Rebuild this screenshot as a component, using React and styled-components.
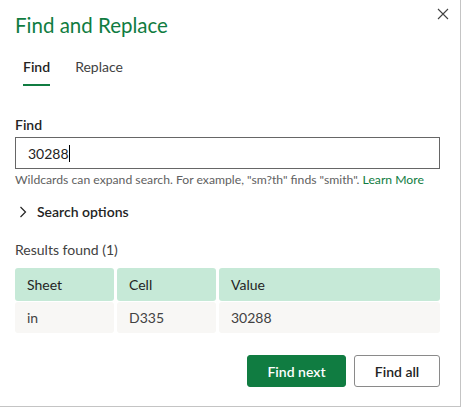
import React from "react";
import styled, { createGlobalStyle } from "styled-components";

const GlobalStyle = createGlobalStyle`
  html, body {
    margin: 0;
    padding: 0;
    background: #ffffff;
  }
  body {
    font-family: Lato, "Noto Sans", "Liberation Sans", sans-serif;
    color: #242424;
  }
`;

const Dialog = styled.div`
  position: relative;
  width: 461px;
  height: 407px;
  box-sizing: border-box;
  border-right: 1px solid #c4c4c4;
  border-bottom: 1px solid #c4c4c4;
  padding: 12px 20px 0 15px;
  display: flex;
  flex-direction: column;
`;

const Title = styled.h1`
  margin: 0;
  font-size: 20.5px;
  font-weight: 400;
  line-height: 26px;
  color: #107c41;
`;

const CloseButton = styled.button`
  position: absolute;
  top: 5px;
  right: 9px;
  width: 17px;
  height: 17px;
  padding: 0;
  border: none;
  background: none;
  display: flex;
  align-items: center;
  justify-content: center;
`;

const Tabs = styled.div`
  display: flex;
  gap: 25px;
  margin-top: 20px;
  padding-left: 8px;
`;

const Tab = styled.div`
  font-size: 14px;
  line-height: 18px;
  padding-bottom: 8px;
  color: ${(p) => (p.$active ? "#242424" : "#424242")};
  font-weight: ${(p) => (p.$active ? 600 : 400)};
  border-bottom: 2px solid ${(p) => (p.$active ? "#107c41" : "transparent")};
`;

const Label = styled.div`
  margin-top: 30px;
  font-size: 14px;
  font-weight: 600;
  line-height: 18px;
  color: #242424;
`;

const Input = styled.div`
  margin-top: 3px;
  height: 32px;
  box-sizing: border-box;
  border: 1px solid #666666;
  padding-left: 12px;
  display: flex;
  align-items: center;
  font-size: 14px;
  color: #242424;
`;

const Caret = styled.span`
  display: inline-block;
  width: 1px;
  height: 17px;
  background: #000;
`;

const Hint = styled.div`
  margin-top: 3px;
  font-size: 12.2px;
  line-height: 16px;
  color: #616161;
  white-space: nowrap;
`;

const HintLink = styled.span`
  color: #107c41;
`;

const Expander = styled.div`
  margin-top: 15px;
  display: flex;
  align-items: center;
  gap: 10px;
  padding-left: 4px;
  font-size: 14px;
  font-weight: 600;
  line-height: 18px;
  color: #242424;
`;

const Results = styled.div`
  margin-top: 20px;
  font-size: 14px;
  font-weight: 400;
  line-height: 18px;
  color: #424242;
`;

const Table = styled.div`
  margin-top: 9px;
  display: grid;
  grid-template-columns: 99px 99px 1fr;
  gap: 1px 3px;
`;

const Cell = styled.div`
  height: ${(p) => (p.$head ? "33px" : "31px")};
  box-sizing: border-box;
  padding-left: 12px;
  display: flex;
  align-items: center;
  font-size: 14px;
  color: ${(p) => (p.$head ? "#242424" : "#424242")};
  font-weight: 400;
  background: ${(p) => (p.$head ? "#c6e9d7" : "#f8f7f5")};
  border-radius: 3px;
`;

const Footer = styled.div`
  margin-top: 22px;
  display: flex;
  justify-content: flex-end;
  gap: 8px;
`;

const Button = styled.button`
  height: 32px;
  box-sizing: border-box;
  border-radius: 3px;
  font-family: inherit;
  font-size: 14px;
  font-weight: 600;
  padding: 0;
  width: ${(p) => (p.$primary ? "99px" : "86px")};
  background: ${(p) => (p.$primary ? "#107c41" : "#ffffff")};
  color: ${(p) => (p.$primary ? "#ffffff" : "#242424")};
  border: 1px solid ${(p) => (p.$primary ? "#107c41" : "#8a8a8a")};
`;

const rows = [
  { sheet: "in", cell: "D335", value: "30288" },
];

export default function App() {
  return (
    <>
      <GlobalStyle />
      <Dialog>
        <Title>Find and Replace</Title>
        <CloseButton aria-label="Close">
          <svg width="12" height="12" viewBox="0 0 12 12">
            <path d="M1 1 L11 11 M11 1 L1 11" stroke="#424242" strokeWidth="1.1" fill="none" />
          </svg>
        </CloseButton>
        <Tabs>
          <Tab $active>Find</Tab>
          <Tab>Replace</Tab>
        </Tabs>
        <Label>Find</Label>
        <Input>
          30288
          <Caret />
        </Input>
        <Hint>
          Wildcards can expand search. For example, "sm?th" finds "smith".{" "}
          <HintLink>Learn More</HintLink>
        </Hint>
        <Expander>
          <svg width="8" height="12" viewBox="0 0 8 12">
            <path d="M1.5 1 L6.5 6 L1.5 11" stroke="#242424" strokeWidth="1.2" fill="none" />
          </svg>
          Search options
        </Expander>
        <Results>Results found (1)</Results>
        <Table>
          <Cell $head>Sheet</Cell>
          <Cell $head>Cell</Cell>
          <Cell $head>Value</Cell>
          {rows.map((r) => (
            <React.Fragment key={r.cell}>
              <Cell>{r.sheet}</Cell>
              <Cell>{r.cell}</Cell>
              <Cell>{r.value}</Cell>
            </React.Fragment>
          ))}
        </Table>
        <Footer>
          <Button $primary>Find next</Button>
          <Button>Find all</Button>
        </Footer>
      </Dialog>
    </>
  );
}
